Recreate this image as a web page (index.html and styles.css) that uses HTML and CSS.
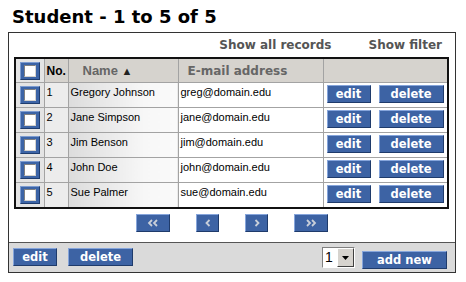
FILE: index.html
```html
<!DOCTYPE html>
<html lang="en">
<head>
    <meta charset="UTF-8">
    <title>Student - 1 to 5 of 5</title>
    <link rel="stylesheet" href="styles.css">
</head>
<body>
    <h1 class="page-title">Student - 1 to 5 of 5</h1>

    <div class="grid-panel">
        <div class="grid-toolbar">
            <a class="tool-link">Show all records</a>
            <a class="tool-link">Show filter</a>
        </div>

        <table class="grid">
            <colgroup>
                <col class="c-check">
                <col class="c-no">
                <col class="c-name">
                <col class="c-mail">
                <col>
            </colgroup>
            <thead>
                <tr>
                    <th class="check-cell"><span class="check"><span class="check-box"></span></span></th>
                    <th class="th-no">No.</th>
                    <th class="th-name">Name <span class="sort">&#9650;</span></th>
                    <th class="th-mail">E-mail address</th>
                    <th></th>
                </tr>
            </thead>
            <tbody>
                <tr>
                    <td class="check-cell"><span class="check"><span class="check-box"></span></span></td>
                    <td class="no-cell">1</td>
                    <td class="name-cell">Gregory Johnson</td>
                    <td>greg@domain.edu</td>
                    <td class="act-cell"><button class="btn btn-edit">edit</button><button class="btn btn-delete">delete</button></td>
                </tr>
                <tr>
                    <td class="check-cell"><span class="check"><span class="check-box"></span></span></td>
                    <td class="no-cell">2</td>
                    <td class="name-cell">Jane Simpson</td>
                    <td>jane@domain.edu</td>
                    <td class="act-cell"><button class="btn btn-edit">edit</button><button class="btn btn-delete">delete</button></td>
                </tr>
                <tr>
                    <td class="check-cell"><span class="check"><span class="check-box"></span></span></td>
                    <td class="no-cell">3</td>
                    <td class="name-cell">Jim Benson</td>
                    <td>jim@domain.edu</td>
                    <td class="act-cell"><button class="btn btn-edit">edit</button><button class="btn btn-delete">delete</button></td>
                </tr>
                <tr>
                    <td class="check-cell"><span class="check"><span class="check-box"></span></span></td>
                    <td class="no-cell">4</td>
                    <td class="name-cell">John Doe</td>
                    <td>john@domain.edu</td>
                    <td class="act-cell"><button class="btn btn-edit">edit</button><button class="btn btn-delete">delete</button></td>
                </tr>
                <tr>
                    <td class="check-cell"><span class="check"><span class="check-box"></span></span></td>
                    <td class="no-cell">5</td>
                    <td class="name-cell">Sue Palmer</td>
                    <td>sue@domain.edu</td>
                    <td class="act-cell"><button class="btn btn-edit">edit</button><button class="btn btn-delete">delete</button></td>
                </tr>
            </tbody>
        </table>

        <div class="pager">
            <button class="btn pg-wide"><svg width="12" height="8" viewBox="0 0 12 8"><path d="M5 1 L2 4 L5 7 M10 1 L7 4 L10 7" fill="none" stroke="#c9cfd9" stroke-width="1.8"/></svg></button>
            <button class="btn pg-narrow"><svg width="6" height="8" viewBox="0 0 6 8"><path d="M4.5 1 L1.5 4 L4.5 7" fill="none" stroke="#c9cfd9" stroke-width="1.8"/></svg></button>
            <button class="btn pg-narrow"><svg width="6" height="8" viewBox="0 0 6 8"><path d="M1.5 1 L4.5 4 L1.5 7" fill="none" stroke="#c9cfd9" stroke-width="1.8"/></svg></button>
            <button class="btn pg-wide"><svg width="12" height="8" viewBox="0 0 12 8"><path d="M2 1 L5 4 L2 7 M7 1 L10 4 L7 7" fill="none" stroke="#c9cfd9" stroke-width="1.8"/></svg></button>
        </div>

        <div class="grid-footer">
            <button class="btn btn-edit">edit</button>
            <button class="btn btn-delete">delete</button>
            <div class="spacer"></div>
            <div class="page-select"><span class="page-num">1</span><span class="page-arrow"><svg width="7" height="4" viewBox="0 0 7 4"><path d="M0 0 H7 L3.5 4 Z" fill="#000"/></svg></span></div>
            <button class="btn btn-add">add new</button>
        </div>
    </div>
</body>
</html>
```

FILE: styles.css
```css
body {
    margin: 0;
    background: #fff;
    font-family: 'Liberation Sans', Arial, sans-serif;
    color: #000;
}

.page-title {
    margin: 0;
    padding: 5px 0 0 12px;
    height: 27px;
    font-family: 'DejaVu Sans', Verdana, sans-serif;
    font-size: 18px;
    font-weight: bold;
    line-height: 24px;
}

.grid-panel {
    width: 446px;
    margin-left: 8px;
    border: 1px solid #333;
    background: #fff;
}

.grid-toolbar {
    display: flex;
    justify-content: flex-end;
    gap: 37px;
    height: 24px;
    padding-right: 13px;
    font-family: 'DejaVu Sans', Verdana, sans-serif;
    font-size: 12px;
    font-weight: bold;
    line-height: 24px;
    color: #555;
}
.tool-link { cursor: pointer; }

.grid {
    width: 435px;
    margin-left: 5px;
    border-collapse: collapse;
    border: 2px solid #111;
    table-layout: fixed;
    font-size: 11px;
}
.c-check { width: 29px; }
.c-no { width: 24px; }
.c-name { width: 110px; }
.c-mail { width: 145px; }

.grid th,
.grid td {
    padding: 0 2px;
    border: 1px solid #a3a3a3;
    text-align: left;
    white-space: nowrap;
}
.grid th {
    height: 23px;
    background: #d6d3ce;
    color: #666;
    font-weight: bold;
}
.th-no {
    color: #000 !important;
    font-size: 12px;
}
.th-name {
    font-size: 13px;
    padding-left: 14px !important;
}
.sort {
    font-size: 11px;
    color: #222;
}
.th-mail {
    font-family: 'DejaVu Sans', Verdana, sans-serif;
    font-size: 12px;
    padding-left: 9px !important;
}

.grid td {
    height: 21px;
    padding-top: 3px;
    vertical-align: top;
}
.grid .check-cell {
    padding: 0;
    vertical-align: middle;
    text-align: center;
    background: #e4e4e4;
}
.no-cell { background: #ececec; }
.name-cell { background: linear-gradient(to right, #dcdcdc, #f7f7f7 70%, #fafafa); }

.check {
    display: inline-flex;
    align-items: center;
    justify-content: center;
    width: 20px;
    height: 18px;
    box-sizing: border-box;
    background: #3c64a6;
    border: 1px solid;
    border-color: #7c9bd0 #1e3c6e #1e3c6e #7c9bd0;
    vertical-align: middle;
}
.check-box {
    width: 10px;
    height: 10px;
    background: #fff;
    border: 1px solid;
    border-color: #808080 #d6d3ce #d6d3ce #808080;
}

.btn {
    box-sizing: border-box;
    height: 18px;
    padding: 0;
    background: #3d63a4;
    border: 1px solid;
    border-color: #86a5db #1f3b6b #1f3b6b #86a5db;
    color: #fff;
    font-family: 'DejaVu Sans', Verdana, sans-serif;
    font-size: 11.5px;
    font-weight: bold;
    line-height: 15px;
    cursor: pointer;
}
.btn-edit { width: 44px; }
.btn-delete { width: 65px; }
.act-cell .btn-edit { margin-left: 1px; }
.act-cell .btn-delete { margin-left: 8px; }
.grid .act-cell { padding-top: 2px; }

.pager {
    display: flex;
    justify-content: center;
    gap: 26px;
    padding: 5px 0 10px;
}
.pager .btn { display: flex; align-items: center; justify-content: center; }
.pg-wide { width: 34px; }
.pg-narrow { width: 23px; }

.grid-footer {
    display: flex;
    align-items: flex-start;
    gap: 11px;
    height: 30px;
    padding: 5px 8px 0 4px;
    box-sizing: border-box;
    border-top: 1px solid #555;
    background: #dadada;
}
.spacer { flex: 1; }
.page-select {
    display: flex;
    margin-top: -1px;
    margin-right: -4px;
    width: 33px;
    height: 21px;
    box-sizing: border-box;
    border: 1px solid;
    border-color: #808080 #fff #fff #808080;
    background: #fff;
}
.page-num {
    flex: 1;
    padding-left: 2px;
    font-size: 14px;
    line-height: 19px;
}
.page-arrow {
    display: flex;
    align-items: center;
    justify-content: center;
    width: 15px;
    background: #d6d3ce;
    border: 1px solid;
    border-color: #fff #404040 #404040 #fff;
}
.btn-add {
    width: 85px;
    margin-top: 3px;
}
```
